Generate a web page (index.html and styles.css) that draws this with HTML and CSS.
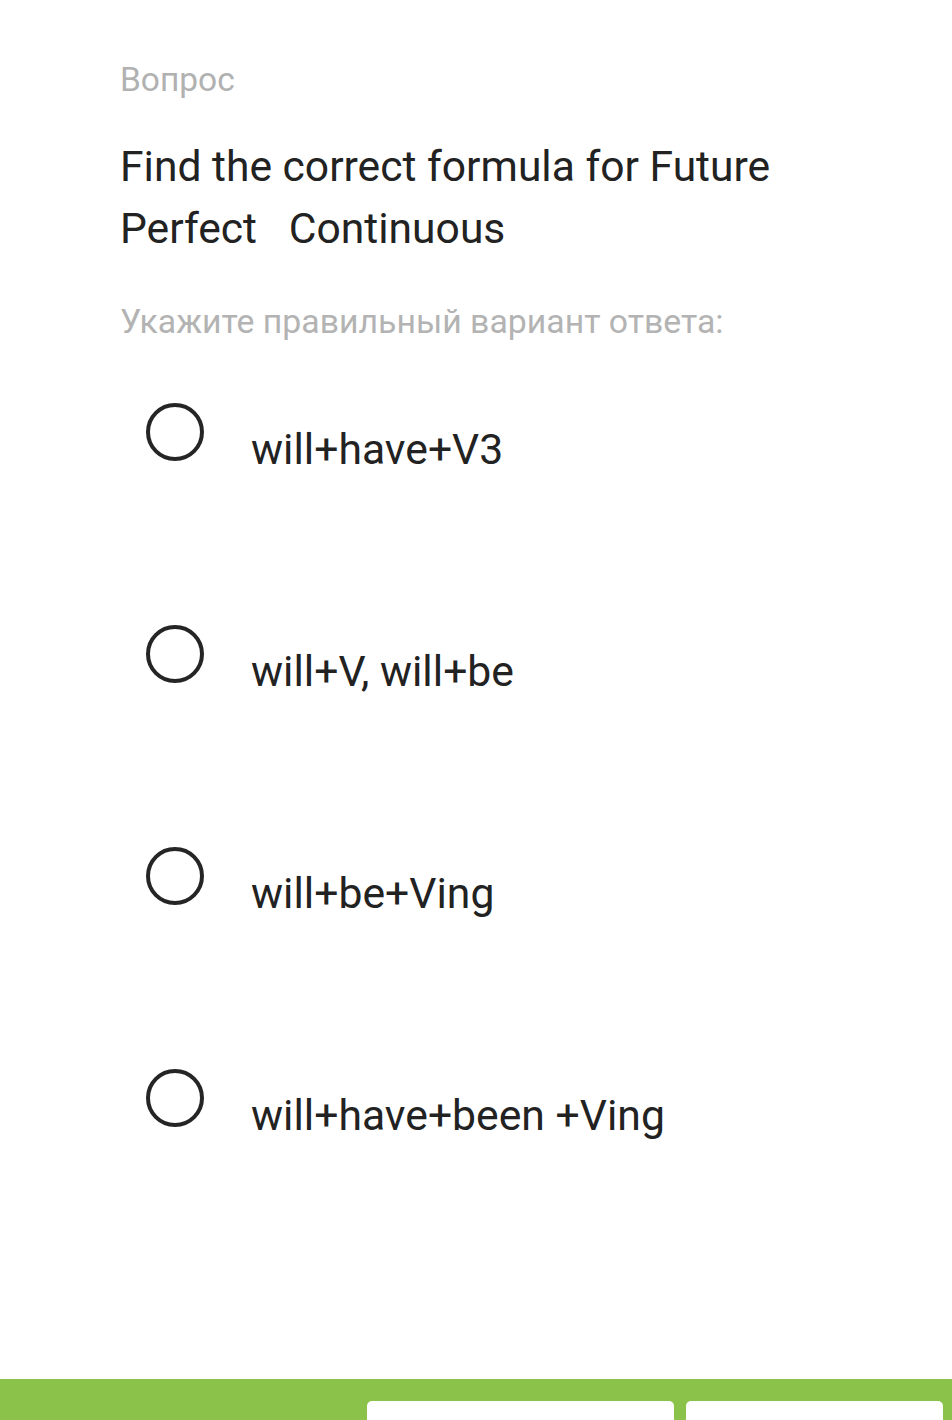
FILE: index.html
```html
<!DOCTYPE html>
<html lang="ru">
<head>
<meta charset="utf-8">
<title>Вопрос</title>
<link rel="stylesheet" href="styles.css">
</head>
<body>
<div class="page">
  <main class="content">
    <div class="label">Вопрос</div>
    <h1 class="question">Find the correct formula for Future Perfect&nbsp;&nbsp; Continuous</h1>
    <div class="hint">Укажите правильный вариант ответа:</div>
    <ul class="options">
      <li class="option"><span class="radio"></span><span class="opt-text">will+have+V3</span></li>
      <li class="option"><span class="radio"></span><span class="opt-text">will+V, will+be</span></li>
      <li class="option"><span class="radio"></span><span class="opt-text">will+be+Ving</span></li>
      <li class="option"><span class="radio"></span><span class="opt-text">will+have+been +Ving</span></li>
    </ul>
  </main>
  <footer class="footer">
    <div class="btn"></div>
    <div class="btn btn-second"></div>
  </footer>
</div>
</body>
</html>
```
FILE: styles.css
```css
* { box-sizing: border-box; }
html, body { margin: 0; padding: 0; background: #fff; }
body { font-family: Roboto, "Noto Sans", Arial, sans-serif; }
.page {
  height: 1420px;
  display: flex;
  flex-direction: column;
  overflow: hidden;
}
.content {
  flex: 1;
  padding: 58px 120px 0 120px;
}
.label {
  font-size: 33.5px;
  line-height: 44px;
  color: #b1b1b1;
}
.question {
  margin: 33px 0 0 0;
  font-weight: 400;
  font-size: 42.6px;
  line-height: 62px;
  color: #222;
  width: 700px;
}
.hint {
  margin-top: 41px;
  font-size: 33.8px;
  line-height: 44px;
  color: #b3b3b3;
}
.options {
  list-style: none;
  margin: 59px 0 0 0;
  padding: 0 0 0 26px;
}
.option {
  display: flex;
  align-items: flex-start;
  height: 222px;
}
.radio {
  width: 58px;
  height: 58px;
  border: 4.5px solid #252525;
  border-radius: 50%;
  flex: none;
}
.opt-text {
  margin-left: 47px;
  margin-top: 21px;
  font-size: 42.7px;
  line-height: 50px;
  color: #222;
}
.footer {
  flex: none;
  height: 41px;
  background: #8bc34a;
  display: flex;
  align-items: flex-start;
  padding: 22px 9px 0 367px;
  gap: 12px;
}
.btn {
  width: 307px;
  height: 40px;
  background: #fff;
  border-radius: 5px;
}
.btn-second { width: 257px; }
```
